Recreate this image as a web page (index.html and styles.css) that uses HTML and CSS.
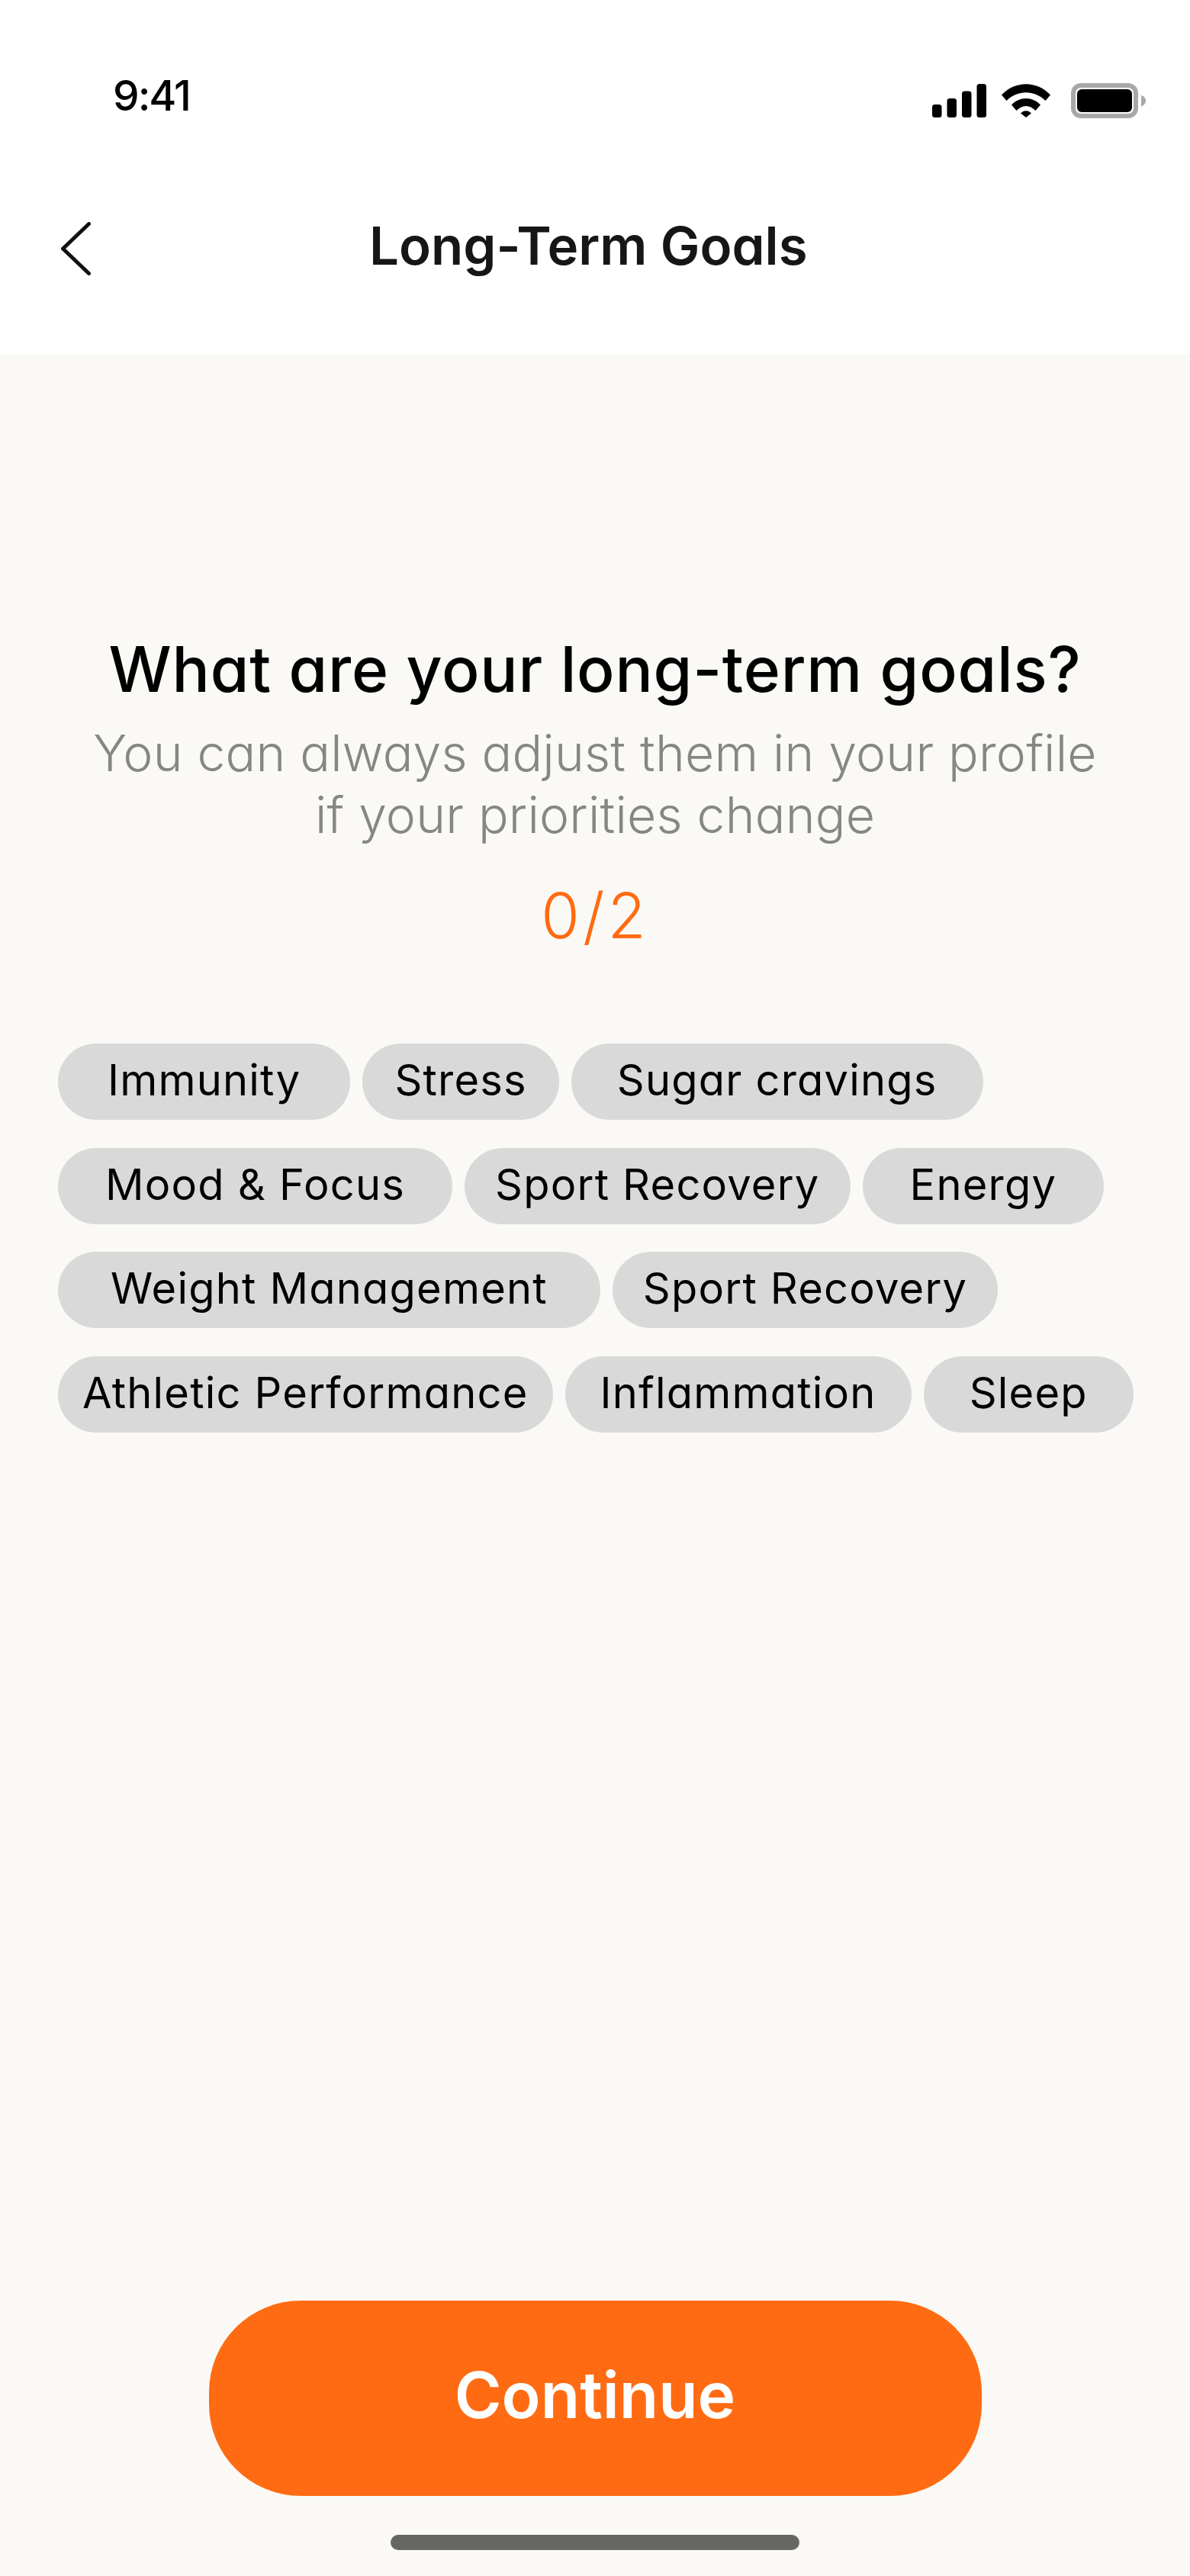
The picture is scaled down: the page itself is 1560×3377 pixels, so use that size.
FILE: index.html
```html
<!DOCTYPE html>
<html>
<head>
    <title>Long-Term Goals</title>
    <link rel="stylesheet" href="styles.css">
</head>
<body>
<div class="screen">
    <!--status bar and title-->
    <header class="top">
        <div class="status-bar">
            <span class="clock">9:41</span>
            <div class="status-icons">
                <svg class="icon-signal" viewBox="0 0 71 44" width="71" height="44">
                    <rect x="0" y="27" width="12.500" height="17" rx="3.500"/>
                    <rect x="19.500" y="19" width="12.500" height="25" rx="3.500"/>
                    <rect x="39" y="9.500" width="12.500" height="34.500" rx="3.500"/>
                    <rect x="58.500" y="0" width="12.500" height="44" rx="3.500"/>
                </svg>
                <svg class="icon-wifi" viewBox="0 0 64 44" width="64" height="44">
                    <path d="M0 14.500C17.500 -4.500 46.500 -4.500 64 14.500L57.500 22C43 7.500 21 7.500 6.500 22Z"/>
                    <path d="M13 27.500C23.500 16 40.500 16 51 27.500L44.500 35C36.500 27 27.500 27 19.500 35Z"/>
                    <path d="M25 38.500C29 34 35 34 39 38.500L32 44Z"/>
                </svg>
                <svg class="icon-battery" viewBox="0 0 98 46" width="98" height="46">
                    <rect x="3" y="3" width="82" height="40" rx="10" fill="none" stroke="#a8a8a8" stroke-width="6"/>
                    <rect x="8" y="8" width="72" height="30" rx="6"/>
                    <path d="M92 16C96 17 98 20 98 23C98 26 96 29 92 31Z" fill="#a8a8a8"/>
                </svg>
            </div>
        </div>
        <div class="nav-bar">
            <svg class="icon-back" viewBox="0 0 40 70" width="40" height="70">
                <path d="M36.500 2.500L2.500 35L36.500 67.500" fill="none" stroke="#111" stroke-width="5" stroke-linecap="round" stroke-linejoin="round"/>
            </svg>
            <h2 class="nav-title">Long-Term Goals</h2>
        </div>
    </header>

    <main class="content">
        <h1 class="question">What are your long-term goals?</h1>
        <p class="hint">You can always adjust them in your profile<br>if your priorities change</p>
        <div class="counter">0/2</div>

        <!--goal chips-->
        <div class="chips">
            <div class="chip chip-immunity">Immunity</div>
            <div class="chip chip-stress">Stress</div>
            <div class="chip chip-wide">Sugar cravings</div>
            <div class="chip chip-roomy">Mood &amp; Focus</div>
            <div class="chip">Sport Recovery</div>
            <div class="chip chip-roomy">Energy</div>
            <div class="chip chip-weight">Weight Management</div>
            <div class="chip">Sport Recovery</div>
            <div class="chip chip-tight">Athletic Performance</div>
            <div class="chip chip-inflammation">Inflammation</div>
            <div class="chip chip-wide">Sleep</div>
        </div>
    </main>

    <footer class="bottom">
        <a href="#" class="continue">Continue</a>
        <div class="home-bar"></div>
    </footer>
</div>
</body>
</html>
```
FILE: styles.css
```css
/* General styles for the page */
body {
    margin: 0;
    padding: 0;
    background-color: #faf9f5;
    font-family: 'Inter', 'Liberation Sans', sans-serif;
    font-feature-settings: "cv11" 1;
    color: #000;
}

.screen {
    display: flex;
    flex-direction: column;
    height: 3377px;
}

/* Status bar and title */
.top {
    height: 464px;
    background-color: #fff;
}

.status-bar {
    display: flex;
    justify-content: space-between;
    height: 60px;
    padding: 95px 58px 0 148px;
}

.clock {
    font-size: 55px;
    font-weight: 500;
    letter-spacing: -2px;
    line-height: 60px;
}

.status-icons {
    display: flex;
    align-items: center;
    gap: 20px;
    height: 46px;
    margin-top: 14px;
}

.icon-battery {
    margin-left: 7px;
}

.nav-bar {
    display: flex;
    align-items: flex-start;
    gap: 364px;
    padding: 136px 0 0 80px;
}

.nav-title {
    margin: -4px 0 0;
    font-size: 69px;
    font-weight: 600;
    letter-spacing: 0;
    color: #161616;
    line-height: 70px;
}

/* Question block */
.content {
    flex: 1;
    padding: 0 76px;
    text-align: center;
}

.question {
    margin: 364px 0 0;
    font-size: 82px;
    font-weight: 500;
    letter-spacing: 0.8px;
    line-height: 100px;
    white-space: nowrap;
}

.hint {
    margin: 19px 0 0;
    font-size: 66px;
    font-weight: 300;
    letter-spacing: 0.2px;
    line-height: 81px;
    color: #868686;
    white-space: nowrap;
}

.counter {
    margin-top: 42px;
    font-size: 82px;
    font-weight: 300;
    letter-spacing: 4px;
    line-height: 100px;
    color: #ff6b12;
}

/* Goal chips */
.chips {
    display: flex;
    flex-wrap: wrap;
    gap: 36.5px 16px;
    margin: 117px -16px 0 0;
}

.chip {
    height: 100px;
    padding: 0 40px;
    border-radius: 50px;
    background-color: #d9d9d9;
    font-size: 56px;
    font-weight: 400;
    letter-spacing: 1.2px;
    line-height: 97px;
    white-space: nowrap;
}

.chip-wide {
    padding: 0 60px;
}

.chip-roomy {
    padding: 0 62px;
}

.chip-tight {
    padding: 0 32px;
}

.chip-immunity {
    padding: 0 65px;
}

.chip-stress {
    padding: 0 42px;
}

.chip-weight {
    padding: 0 69px;
}

.chip-inflammation {
    padding: 0 46px;
}

/* Continue button */
.bottom {
    display: flex;
    flex-direction: column;
    align-items: center;
    height: 361px;
}

.continue {
    display: block;
    width: 1013px;
    height: 256px;
    border-radius: 120px;
    background-color: #ff6b12;
    color: #fff;
    font-size: 84px;
    font-weight: 600;
    line-height: 248px;
    text-align: center;
    text-decoration: none;
}

.home-bar {
    width: 536px;
    height: 20px;
    margin-top: 51px;
    border-radius: 10px;
    background-color: #666663;
}
```
